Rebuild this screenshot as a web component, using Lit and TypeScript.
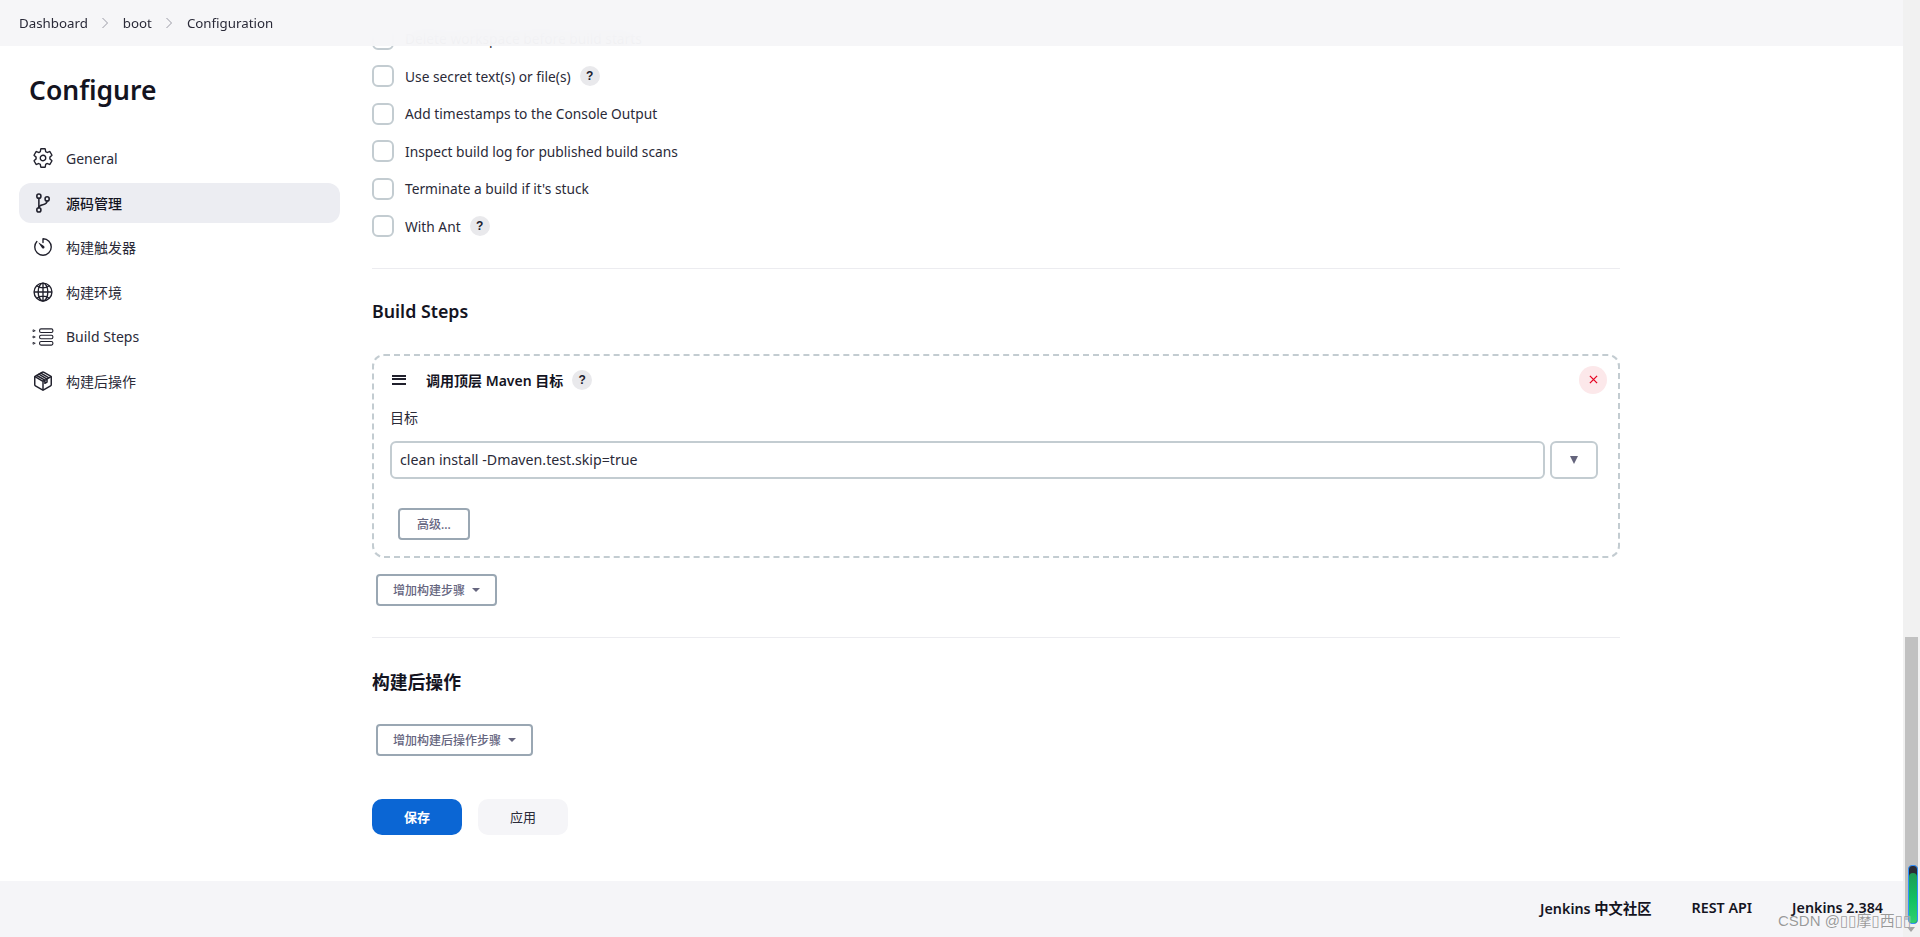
import { LitElement, html, css, svg } from "lit";
import { customElement } from "lit/decorators.js";

const icons = {
  gear: svg`<path fill="none" stroke="currentColor" stroke-width="32" stroke-linecap="round" stroke-linejoin="round" d="M262.29 192.31a64 64 0 1057.4 57.4 64.13 64.13 0 00-57.4-57.4zM416.39 256a154.34 154.34 0 01-1.53 20.79l45.21 35.46a10.81 10.81 0 012.45 13.75l-42.77 74a10.81 10.81 0 01-13.14 4.59l-44.9-18.08a16.11 16.11 0 00-15.17 1.75A164.48 164.48 0 01325 400.8a15.94 15.94 0 00-8.82 12.14l-6.73 47.89a11.08 11.08 0 01-10.68 9.17h-85.54a11.11 11.11 0 01-10.69-8.87l-6.72-47.82a16.07 16.07 0 00-9-12.22 155.3 155.3 0 01-21.46-12.57 16 16 0 00-15.11-1.71l-44.89 18.07a10.81 10.81 0 01-13.14-4.58l-42.77-74a10.8 10.8 0 012.45-13.75l38.21-30a16.05 16.05 0 006-14.08c-.36-4.17-.58-8.33-.58-12.5s.21-8.27.58-12.35a16 16 0 00-6.07-13.94l-38.19-30A10.81 10.81 0 0149.48 186l42.77-74a10.81 10.81 0 0113.14-4.59l44.9 18.08a16.11 16.11 0 0015.17-1.75A164.48 164.48 0 01187 111.2a15.94 15.94 0 008.82-12.14l6.73-47.89A11.08 11.08 0 01213.23 42h85.54a11.11 11.11 0 0110.69 8.87l6.72 47.82a16.07 16.07 0 009 12.22 155.3 155.3 0 0121.46 12.57 16 16 0 0015.11 1.71l44.89-18.07a10.81 10.81 0 0113.14 4.58l42.77 74a10.8 10.8 0 01-2.45 13.75l-38.21 30a16.05 16.05 0 00-6.05 14.08c.33 4.14.55 8.3.55 12.47z"/>`,
  branch: svg`<g fill="none" stroke="currentColor" stroke-width="36" stroke-linecap="round" stroke-linejoin="round"><circle cx="160" cy="96" r="48"/><circle cx="160" cy="416" r="48"/><path d="M160 368V144"/><circle cx="352" cy="160" r="48"/><path d="M352 208c0 128-192 48-192 160"/></g>`,
  timer: svg`<path fill="none" stroke="currentColor" stroke-width="32" stroke-linecap="round" stroke-linejoin="round" d="M112.91 128A191.85 191.85 0 0064 254c-1.18 106.35 85.65 193.8 192 194 106.2.2 192-85.83 192-192 0-104.54-83.55-189.61-187.5-192a4.36 4.36 0 00-4.5 4.37V152"/><path fill="currentColor" d="M233.38 278.63l-79-113a8.13 8.13 0 0111.32-11.32l113 79a32.5 32.5 0 01-37 53.34 33.21 33.21 0 01-8.32-8.02z"/>`,
  globe: svg`<g fill="none" stroke="currentColor" stroke-width="32" stroke-miterlimit="10"><path d="M256 48C141.13 48 48 141.13 48 256s93.13 208 208 208 208-93.13 208-208S370.87 48 256 48z"/><path d="M256 48c-58.07 0-112.67 93.13-112.67 208S197.93 464 256 464s112.67-93.13 112.67-208S314.07 48 256 48z"/><path d="M256 48v416M464 256H48M117.33 117.33c38.24 27.15 86.38 43.34 138.67 43.34s100.43-16.19 138.67-43.34M394.67 394.67c-38.24-27.15-86.38-43.34-138.67-43.34s-100.43 16.19-138.67 43.34"/></g>`,
  steps: svg`<g fill="none" stroke="currentColor" stroke-width="26" stroke-linejoin="round"><rect x="176" y="68" width="310" height="84" rx="34"/><rect x="176" y="214" width="310" height="84" rx="34"/><rect x="176" y="360" width="310" height="84" rx="34"/><path stroke-width="20" d="M24 88l52 22-52 22zM24 234l52 22-52 22zM24 380l52 22-52 22z"/></g>`,
  cube: svg`<g fill="none" stroke="currentColor" stroke-width="34" stroke-linecap="round" stroke-linejoin="round"><path d="M448 341.37V170.61A32 32 0 00432.11 143l-152-88.46a47.94 47.94 0 00-48.24 0L79.89 143A32 32 0 0064 170.61v170.76A32 32 0 0079.89 369l152 88.46a48 48 0 0048.24 0l152-88.46A32 32 0 00448 341.37z"/><path d="M69 154l187 110 187-110M256 464V264M160 98l190 112v72l-50 28v-72L112 128M208 74l186 108"/></g>`,
};

const navItems: [keyof typeof icons, string, boolean][] = [
  ["gear", "General", false],
  ["branch", "源码管理", true],
  ["timer", "构建触发器", false],
  ["globe", "构建环境", false],
  ["steps", "Build Steps", false],
  ["cube", "构建后操作", false],
];

const checks: [string, boolean][] = [
  ["Delete workspace before build starts", false],
  ["Use secret text(s) or file(s)", true],
  ["Add timestamps to the Console Output", false],
  ["Inspect build log for published build scans", false],
  ["Terminate a build if it's stuck", false],
  ["With Ant", true],
];

@customElement("app-root")
export class AppRoot extends LitElement {
  static styles = css`
    :host {
      display: block;
      height: 937px;
      overflow: hidden;
      position: relative;
      background: #fff;
      color: #14141f;
      font-family: "Noto Sans", "Noto Sans CJK SC", sans-serif;
      font-size: 14px;
    }
    * { box-sizing: border-box; }
    .frame { display: flex; height: 937px; }
    .page { flex: 1; min-width: 0; display: flex; flex-direction: column; position: relative; }
    .crumbs {
      position: absolute; top: 0; left: 0; right: 0; height: 46px; z-index: 2;
      display: flex; align-items: center; padding-left: 19px;
      background: rgba(245, 245, 248, 0.94);
      backdrop-filter: blur(12px);
      font-size: 13.3px; color: #2a2a38;
    }
    .crumbs svg { width: 8px; height: 12px; margin: 0 13.5px; color: #9a9aa5; }
    .body { flex: 1; display: grid; grid-template-columns: 372px 1248px; align-items: start; }
    .side { padding: 71px 32px 0 19px; }
    .side h1 { margin: 0 0 29px 10px; font-size: 26.5px; line-height: 38px; font-weight: 600; color: #14141f; }
    .nav { display: flex; flex-direction: column; gap: 4.7px; }
    .nav a {
      height: 40px; border-radius: 12px; display: flex; align-items: center;
      padding-left: 13px; gap: 12px; color: #2a2a38;
    }
    .nav a.on { background: #ecedf2; color: #14141f; font-weight: 500; }
    .nav svg { width: 22px; height: 22px; flex: none; color: #20202c; }
    .main { padding-top: 27.5px; }
    .checks { display: flex; flex-direction: column; gap: 15.6px; }
    .check { display: flex; align-items: center; height: 22px; color: #2a2a38; font-size: 13.75px; }
    .box { width: 22px; height: 22px; border: 2px solid #c3ccd1; border-radius: 6px; margin-right: 11px; flex: none; }
    .help {
      width: 20px; height: 20px; border-radius: 50%; background: #e9e9ec; color: #20202c;
      display: inline-flex; align-items: center; justify-content: center;
      font: 700 12px "Liberation Sans", sans-serif; margin-left: 9px; flex: none;
    }
    hr { border: 0; height: 1px; background: #ececf0; margin: 0; }
    .h1 { margin-top: 30.5px; }
    h2 { margin: 0; font-size: 17.8px; line-height: 26px; font-weight: 600; color: #14141f; }
    .steps-title { margin-top: 29px; }
    .card {
      margin-top: 30px; height: 204px; border: 2px dashed #c3ccd1; border-radius: 12px;
      padding: 9px 20px 0 16px;
    }
    .card-head { display: flex; align-items: center; height: 30px; position: relative; }
    .drag { width: 14px; height: 10px; margin: 0 20px 0 2px; border-top: 2px solid #20202c; border-bottom: 2px solid #20202c; position: relative; flex: none; }
    .drag::after { content: ""; position: absolute; left: 0; right: 0; top: 1px; height: 2px; background: #20202c; }
    .card-title { font-size: 14px; font-weight: 600; color: #14141f; }
    .del {
      margin: 0 -9px 0 auto; width: 28px; height: 28px; border-radius: 50%; background: #fce8ea;
      display: flex; align-items: center; justify-content: center;
    }
    .del svg { width: 9px; height: 9px; }
    .lbl { margin-top: 13px; line-height: 20px; font-size: 14px; color: #2a2a38; }
    .fieldrow { display: flex; gap: 5px; margin-top: 13px; }
    .input {
      flex: 1; height: 38px; border: 2px solid #c3ccd1; border-radius: 6px; background: #fff;
      display: flex; align-items: center; padding-left: 8px; font-size: 14.2px; color: #2a2a38;
    }
    .drop {
      width: 48px; height: 38px; border: 2px solid #c3ccd1; border-radius: 6px;
      display: flex; align-items: center; justify-content: center;
    }
    .drop i { width: 0; height: 0; border-left: 4.5px solid transparent; border-right: 4.5px solid transparent; border-top: 8px solid #64647c; }
    .btn {
      display: inline-flex; align-items: center; height: 32px; border: 2px solid #9aa7b3; border-radius: 4px;
      background: #fff; color: #66667f; font-size: 12px; font-weight: 500; padding: 0 15px;
    }
    .btn .caret { width: 0; height: 0; margin-left: 7px; border-left: 4px solid transparent; border-right: 4px solid transparent; border-top: 4px solid #66667f; }
    .adv { margin: 29px 0 0 8px; width: 72px; justify-content: center; padding: 0; }
    .addstep { margin: 16px 0 0 4px; width: 121px; display: flex; }
    .h2 { margin-top: 31.5px; }
    .post { margin-top: 31px; }
    .addpost { margin: 29px 0 0 4px; width: 157px; display: flex; }
    .actions { display: flex; gap: 16px; margin-top: 43px; }
    .actions div {
      width: 90px; height: 36px; border-radius: 10px; display: flex; align-items: center; justify-content: center;
      padding-bottom: 2px; background: #f5f5f8; color: #2a2a38; font-size: 13px;
    }
    .actions .save { background: #0b66d4; color: #fff; font-weight: 700; }
    footer {
      position: absolute; left: 0; right: 0; bottom: 0; height: 56px; background: #f5f5f8;
      display: flex; justify-content: flex-end; align-items: center; gap: 40px; padding: 0 20px 3px 0;
      font-size: 14.3px; font-weight: 600; color: #14141f;
    }
    .scroll { width: 17px; background: #f1f1f1; position: relative; flex: none; }
    .thumb { position: absolute; left: 2px; right: 2px; top: 637px; height: 283px; background: #c1c1c1; }
    .arrow { position: absolute; left: 4px; bottom: 5px; width: 0; height: 0; border-left: 4.5px solid transparent; border-right: 4.5px solid transparent; border-top: 5px solid #a3a3a3; }
    .widget {
      position: absolute; left: 5px; top: 865px; width: 10px; height: 59px; border-radius: 4px;
      border: 1px solid #2f8fff; background: #2b2b35; overflow: hidden;
    }
    .widget i { display: block; margin-top: 7px; height: 50px; border-radius: 4px 4px 0 0; background: linear-gradient(#1f9a55, #12c060 50%, #2fd070); }
    .mark {
      position: absolute; left: 1778px; top: 909px; z-index: 3; white-space: nowrap;
      font-family: "Liberation Sans", "DejaVu Sans", "Noto Sans CJK SC", sans-serif; font-size: 15px;
      color: rgba(120, 120, 120, 0.75); text-shadow: 0 0 1px #fff;
    }
  `;

  render() {
    const chev = html`<svg viewBox="0 0 8 12"><path d="M1.5 1l5 5-5 5" fill="none" stroke="currentColor" stroke-width="1"/></svg>`;
    return html`
      <div class="frame">
        <div class="page">
          <div class="crumbs"><span>Dashboard</span>${chev}<span>boot</span>${chev}<span>Configuration</span></div>
          <div class="body">
            <aside class="side">
              <h1>Configure</h1>
              <nav class="nav">
                ${navItems.map(
                  ([ic, t, on]) => html`<a class=${on ? "on" : ""}><svg viewBox="0 0 512 512">${icons[ic]}</svg><span>${t}</span></a>`
                )}
              </nav>
            </aside>
            <main class="main">
              <div class="checks">
                ${checks.map(
                  ([t, h]) => html`<div class="check"><span class="box"></span><span>${t}</span>${h ? html`<span class="help">?</span>` : ""}</div>`
                )}
              </div>
              <hr class="h1" />
              <h2 class="steps-title">Build Steps</h2>
              <section class="card">
                <div class="card-head">
                  <span class="drag"></span>
                  <span class="card-title">调用顶层 Maven 目标</span>
                  <span class="help">?</span>
                  <span class="del"><svg viewBox="0 0 10 10"><path d="M1 1l8 8M9 1l-8 8" stroke="#e6001f" stroke-width="1.4"/></svg></span>
                </div>
                <div class="lbl">目标</div>
                <div class="fieldrow">
                  <div class="input">clean install -Dmaven.test.skip=true</div>
                  <div class="drop"><i></i></div>
                </div>
                <div class="btn adv">高级...</div>
              </section>
              <div class="btn addstep">增加构建步骤<span class="caret"></span></div>
              <hr class="h2" />
              <h2 class="post">构建后操作</h2>
              <div class="btn addpost">增加构建后操作步骤<span class="caret"></span></div>
              <div class="actions"><div class="save">保存</div><div>应用</div></div>
            </main>
          </div>
          <footer><span>Jenkins 中文社区</span><span>REST API</span><span>Jenkins 2.384</span></footer>
        </div>
        <div class="scroll"><div class="thumb"></div><div class="arrow"></div><div class="widget"><i></i></div></div>
      </div>
      <div class="mark">CSDN @▯▯摩▯西▯▯</div>
    `;
  }
}
